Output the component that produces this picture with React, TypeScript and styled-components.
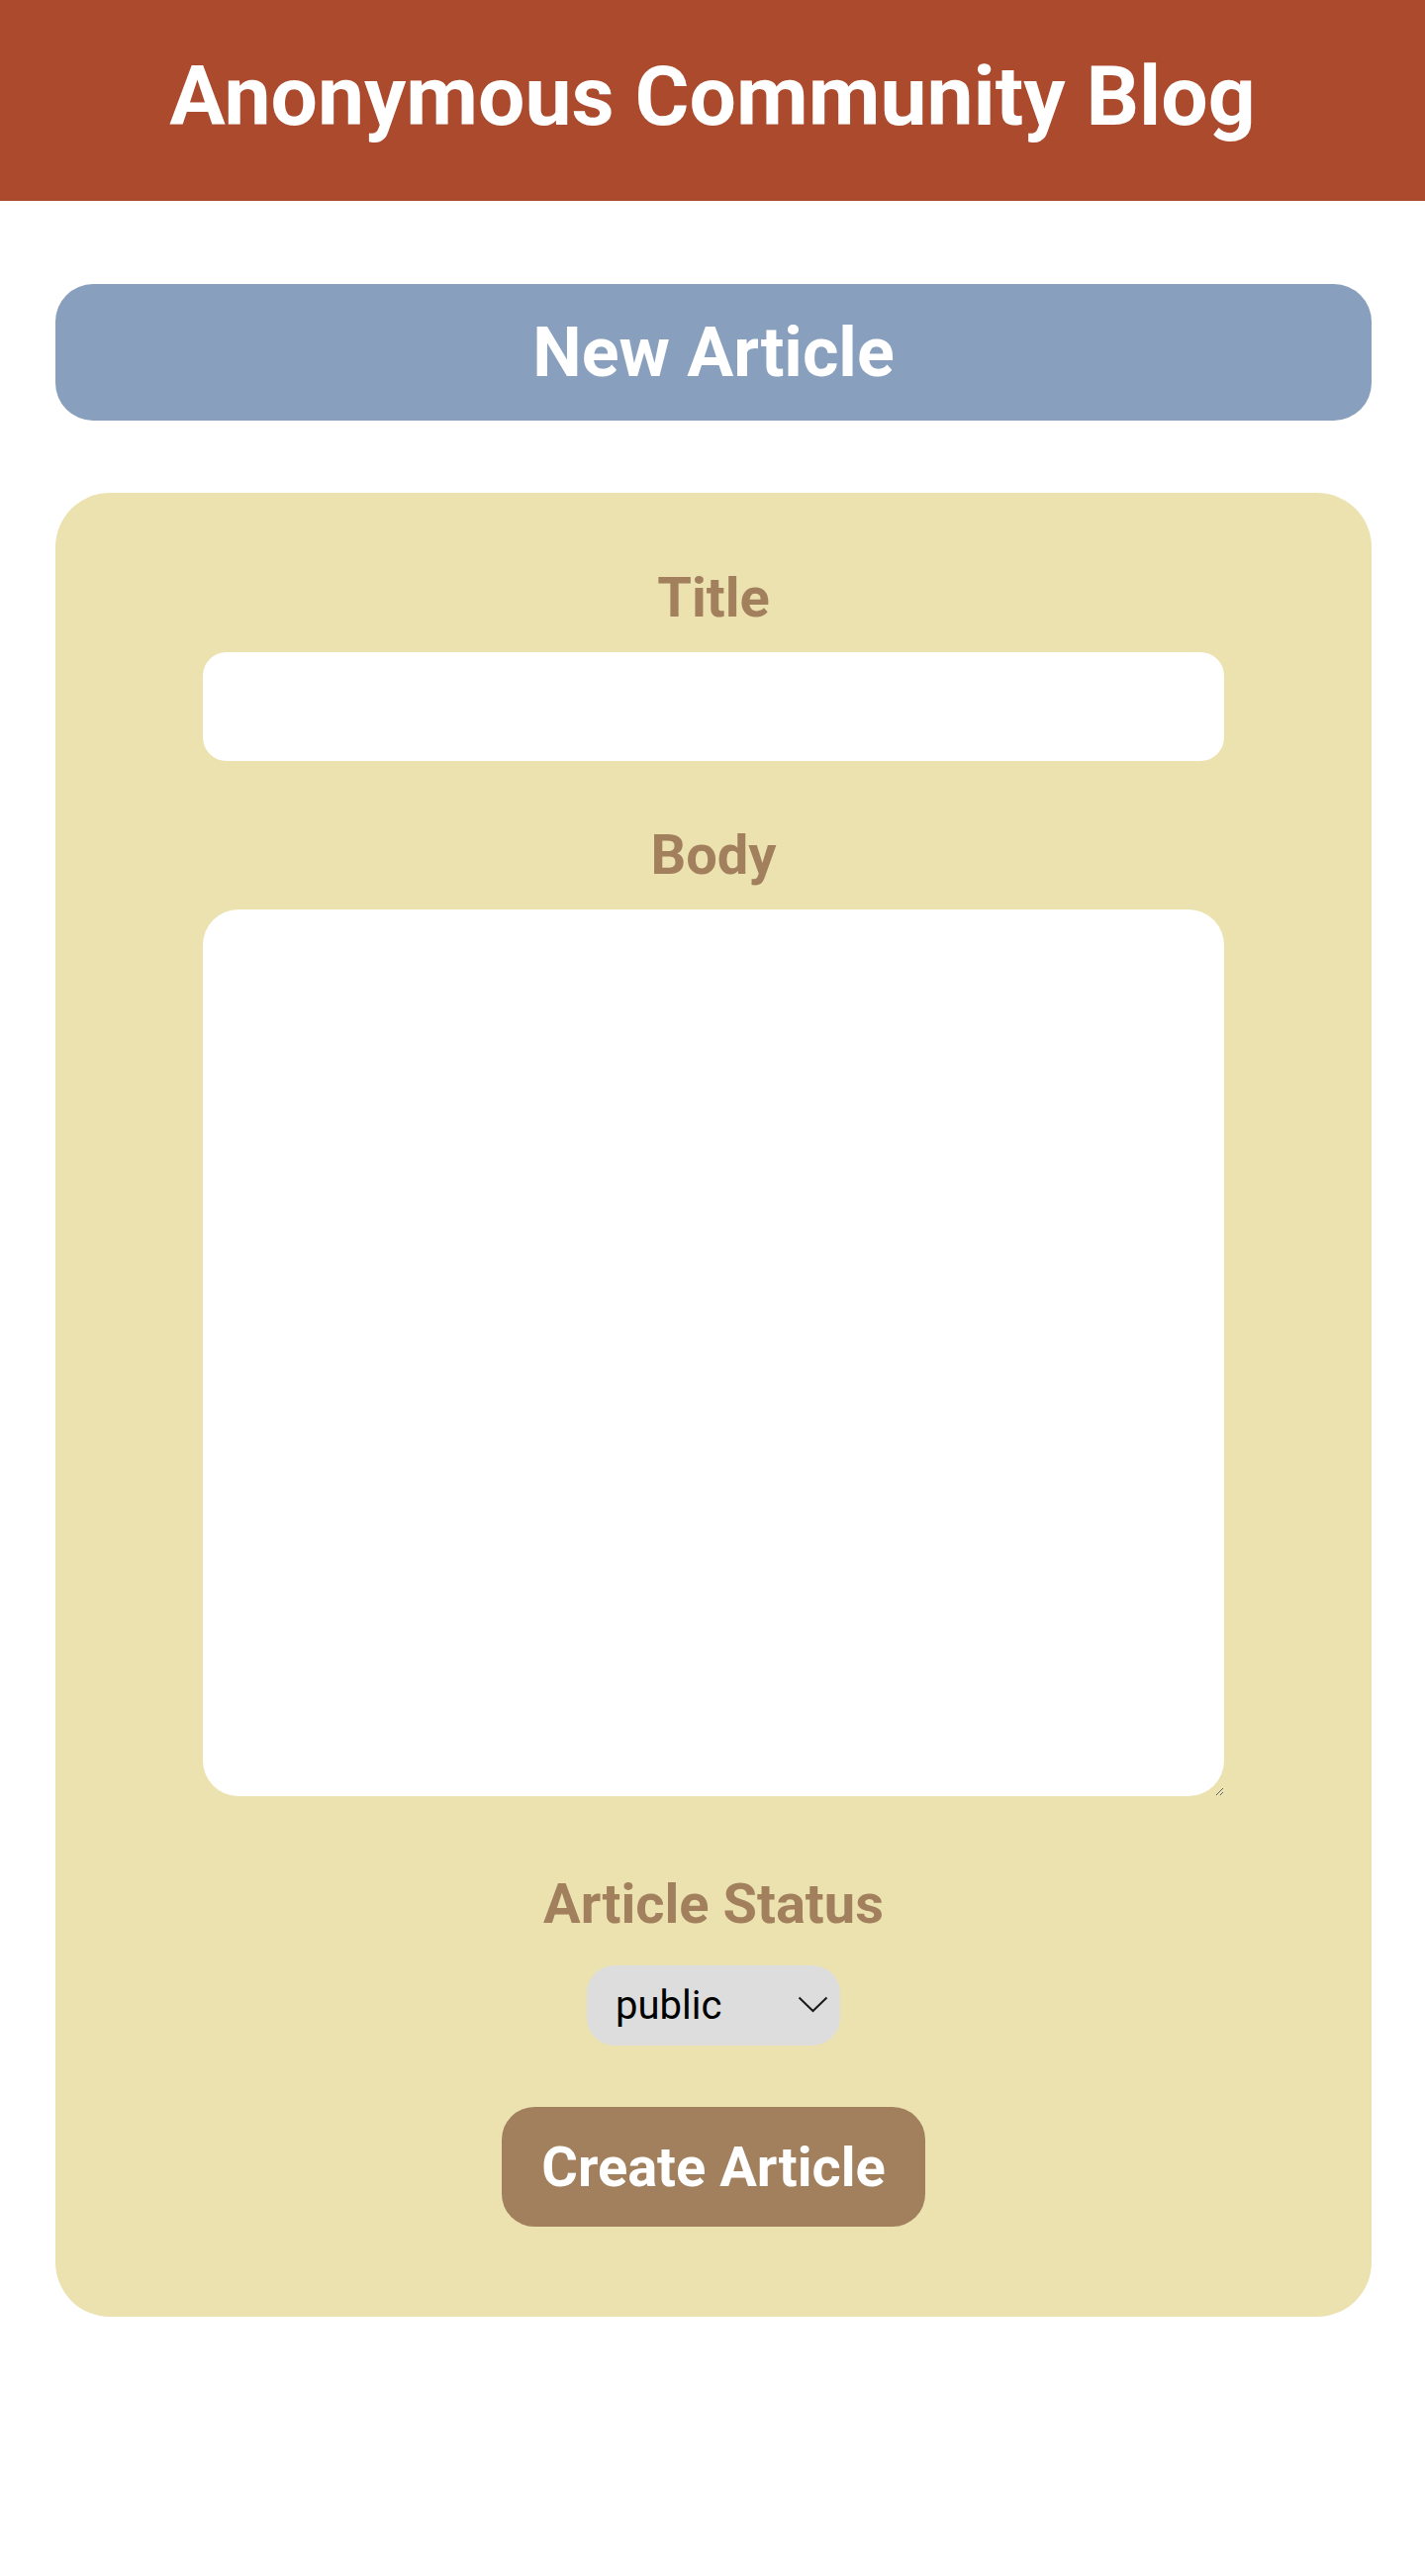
import { createGlobalStyle, styled } from 'styled-components';

const GlobalStyle = createGlobalStyle`
  body {
    margin: 0;
    background: #ffffff;
    font-family: Roboto, "Liberation Sans", Arial, sans-serif;
  }
`;

const Header = styled.header`
  box-sizing: border-box;
  height: 203px;
  padding-top: 48px;
  background: #ab4a2c;
  text-align: center;
`;

const SiteTitle = styled.h1`
  margin: 0;
  font-size: 84px;
  font-weight: 700;
  line-height: normal;
  color: #ffffff;
`;

const Main = styled.main`
  padding: 84px 54px 0 56px;
`;

const Banner = styled.div`
  height: 138px;
  display: flex;
  align-items: center;
  justify-content: center;
  background: #88a0bd;
  border-radius: 38px;
`;

const BannerTitle = styled.h2`
  margin: 0;
  font-size: 70px;
  font-weight: 700;
  line-height: normal;
  color: #ffffff;
`;

const Card = styled.form`
  margin-top: 73px;
  padding: 73px 149px 91px;
  background: #ece2b0;
  border-radius: 55px;
  display: flex;
  flex-direction: column;
  align-items: center;
`;

const Label = styled.label<{ $gap?: number }>`
  display: block;
  margin-top: ${(p) => p.$gap ?? 0}px;
  font-size: 56px;
  font-weight: 700;
  line-height: normal;
  color: #a2805e;
`;

const TitleInput = styled.input`
  box-sizing: border-box;
  width: 100%;
  height: 110px;
  margin-top: 22px;
  border: none;
  outline: none;
  border-radius: 24px;
  background: #ffffff;
  padding: 0 24px;
  font-family: inherit;
  font-size: 40px;
`;

const BodyInput = styled.textarea`
  box-sizing: border-box;
  width: 100%;
  height: 896px;
  margin-top: 22px;
  border: none;
  outline: none;
  border-radius: 36px;
  background: #ffffff;
  padding: 24px;
  font-family: inherit;
  font-size: 40px;
`;

const SelectWrap = styled.div`
  position: relative;
  margin-top: 29px;
  width: 256px;
  height: 81px;
`;

const StatusSelect = styled.select`
  appearance: none;
  box-sizing: border-box;
  width: 100%;
  height: 100%;
  border: none;
  outline: none;
  border-radius: 28px;
  background: #dddddd;
  padding: 0 0 0 29px;
  font-family: inherit;
  font-size: 40px;
  color: #000000;
`;

const Chevron = styled.svg`
  position: absolute;
  right: 12px;
  top: 31px;
  pointer-events: none;
`;

const SubmitButton = styled.button`
  margin-top: 62px;
  height: 121px;
  padding: 0 40px;
  border: none;
  border-radius: 33px;
  background: #a2805e;
  color: #ffffff;
  font-family: inherit;
  font-size: 56px;
  font-weight: 700;
  cursor: pointer;
`;

export default function App() {
  return (
    <>
      <GlobalStyle />
      <Header>
        <SiteTitle>Anonymous Community Blog</SiteTitle>
      </Header>
      <Main>
        <Banner>
          <BannerTitle>New Article</BannerTitle>
        </Banner>
        <Card onSubmit={(e) => e.preventDefault()}>
          <Label htmlFor="title">Title</Label>
          <TitleInput id="title" type="text" />
          <Label htmlFor="body" $gap={62}>Body</Label>
          <BodyInput id="body" />
          <Label htmlFor="status" $gap={76}>Article Status</Label>
          <SelectWrap>
            <StatusSelect id="status" defaultValue="public">
              <option value="public">public</option>
              <option value="private">private</option>
            </StatusSelect>
            <Chevron width="31" height="17" viewBox="0 0 31 17" fill="none">
              <path d="M1.5 1.5 L15.5 15 L29.5 1.5" stroke="#1a1a1a" strokeWidth="2" />
            </Chevron>
          </SelectWrap>
          <SubmitButton type="submit">Create Article</SubmitButton>
        </Card>
      </Main>
    </>
  );
}
